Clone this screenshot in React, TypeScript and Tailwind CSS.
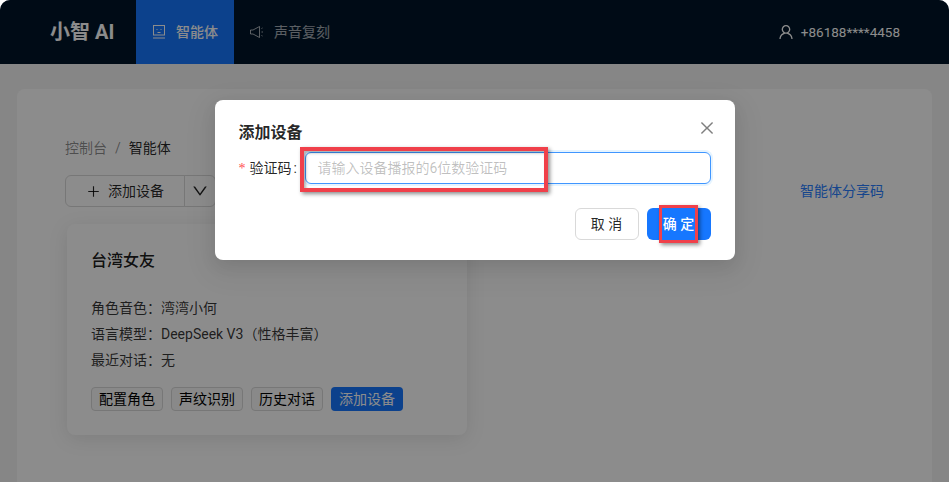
import React from 'react';
import { AiOutlineClose, AiOutlineDown, AiOutlinePlus, AiOutlineUser } from 'react-icons/ai';

const fontStack = "font-['Roboto','Noto_Sans_CJK_SC',sans-serif]";

function FaceIcon() {
  return (
    <svg width="14" height="14" viewBox="0 0 14 14" fill="none" stroke="currentColor" strokeWidth="1">
      <rect x="1.5" y="0.5" width="11" height="9.5" />
      <path d="M1 13h12" />
      <path d="M5.5 7.5h3" />
      <circle cx="5" cy="4.5" r="0.6" fill="currentColor" stroke="none" />
      <circle cx="9" cy="4.5" r="0.6" fill="currentColor" stroke="none" />
    </svg>
  );
}

function SoundIcon() {
  return (
    <svg width="14" height="14" viewBox="0 0 14 14" fill="none" stroke="currentColor" strokeWidth="1">
      <path d="M0.5 5h2.5l6.5-3.5v11L3 9H0.5z" strokeLinejoin="round" />
      <path d="M11.5 3.5l1-0.5M11.5 7h1.5M11.5 10.5l1 0.5" />
    </svg>
  );
}

function Header() {
  return (
    <header className="h-16 bg-[#001529] px-[50px] flex items-center text-white">
      <div className="w-[86px] text-xl font-bold">小智 AI</div>
      <nav className="flex h-full text-sm">
        <div className="h-full w-[98px] bg-[#1677ff] px-4 flex items-center gap-2.5 font-medium">
          <FaceIcon />
          <span>智能体</span>
        </div>
        <div className="h-full w-[112px] px-4 flex items-center gap-2.5 text-white/65">
          <SoundIcon />
          <span>声音复刻</span>
        </div>
      </nav>
      <div className="-mr-px ml-auto flex items-center gap-1.5 text-[13.5px] text-white">
        <AiOutlineUser size={18} />
        <span>+86188****4458</span>
      </div>
    </header>
  );
}

function Tag({ label, primary }: { label: string; primary?: boolean }) {
  return (
    <span
      className={
        primary
          ? 'h-6 w-[72px] rounded bg-[#1677ff] text-white text-sm flex items-center justify-center'
          : 'h-6 w-[72px] rounded border border-[#d9d9d9] bg-[#fafafa] text-sm flex items-center justify-center'
      }
    >
      {label}
    </span>
  );
}

function AgentCard() {
  return (
    <div className="ml-0.5 mt-[17px] w-[400px] rounded-lg bg-white p-6 shadow-[0_4px_20px_rgba(0,0,0,0.1)]">
      <h3 className="pt-px text-base font-medium leading-6 text-black/90">台湾女友</h3>
      <div className="mt-[22px] text-sm leading-[26px] text-black/80">
        <p>角色音色：湾湾小何</p>
        <p>语言模型：DeepSeek V3（性格丰富）</p>
        <p>最近对话：无</p>
      </div>
      <div className="mt-3.5 flex gap-2">
        <Tag label="配置角色" />
        <Tag label="声纹识别" />
        <Tag label="历史对话" />
        <Tag label="添加设备" primary />
      </div>
    </div>
  );
}

function Content() {
  return (
    <main className="px-[17px] pt-[25px]">
      <div className="h-[500px] rounded-lg bg-white px-12 pt-12">
        <div className="text-sm leading-[22px] text-black/45">
          控制台<span className="mx-2">/</span>
          <span className="text-black/85">智能体</span>
        </div>
        <div className="mt-4 flex items-center justify-between">
          <div className="flex h-8 text-sm text-black/85">
            <div className="w-[120px] rounded-l-md border border-[#d9d9d9] flex items-center justify-center gap-[7px]">
              <AiOutlinePlus size={15} />
              <span>添加设备</span>
            </div>
            <div className="w-8 -ml-px rounded-r-md border border-[#d9d9d9] flex items-center justify-center">
              <AiOutlineDown size={18} />
            </div>
          </div>
          <span className="text-sm text-[#2a7fff]">智能体分享码</span>
        </div>
        <AgentCard />
      </div>
    </main>
  );
}

function DeviceModal() {
  return (
    <div className="absolute inset-0 bg-black/45 flex justify-center pt-[100px]">
      <div className="relative h-40 w-[520px] rounded-lg bg-white px-6 py-5 text-black/85 shadow-[0_6px_16px_rgba(0,0,0,0.08),0_9px_28px_8px_rgba(0,0,0,0.05)]">
        <h2 className="pt-px text-base font-semibold leading-6">添加设备</h2>
        <AiOutlineClose size={18} className="absolute right-[19px] top-[19px] text-black/50" />

        <div className="mt-[7px] flex items-center text-sm">
          <span className="w-[11px] pt-0.5 font-['Liberation_Serif',serif] text-[#ff4d4f]">*</span>
          <span className="w-[55px]">验证码<span className="ml-[2px]">:</span></span>
          <div className="h-8 flex-1 rounded-md border border-[#4096ff] px-3 flex items-center text-black/25 shadow-[0_0_0_2px_rgba(5,145,255,0.1)]">
            请输入设备播报的6位数验证码
          </div>
        </div>

        <div className="mt-6 flex justify-end gap-2 text-sm">
          <button className="h-8 w-16 rounded-md border border-[#d9d9d9] bg-white">取 消</button>
          <button className="h-8 w-16 rounded-md bg-[#1677ff] font-medium text-white">确 定</button>
        </div>

        {/* red markup boxes drawn over the screenshot */}
        <div className="absolute left-[85px] top-[47px] h-[45px] w-[248px] border-4 border-[#f0404a] shadow-[2px_2px_4px_rgba(0,0,0,0.45),inset_2px_2px_3px_rgba(0,0,0,0.3)]" />
        <div className="absolute left-[444px] top-[105px] h-[38px] w-[39px] border-[3px] border-[#f0404a] shadow-[2px_2px_4px_rgba(0,0,0,0.45)]" />
      </div>
    </div>
  );
}

export default function App() {
  return (
    <div className={`${fontStack} relative h-[482px] w-[949px] overflow-hidden rounded-t-[10px] bg-[#f5f5f5]`}>
      <Header />
      <Content />
      <DeviceModal />
    </div>
  );
}
